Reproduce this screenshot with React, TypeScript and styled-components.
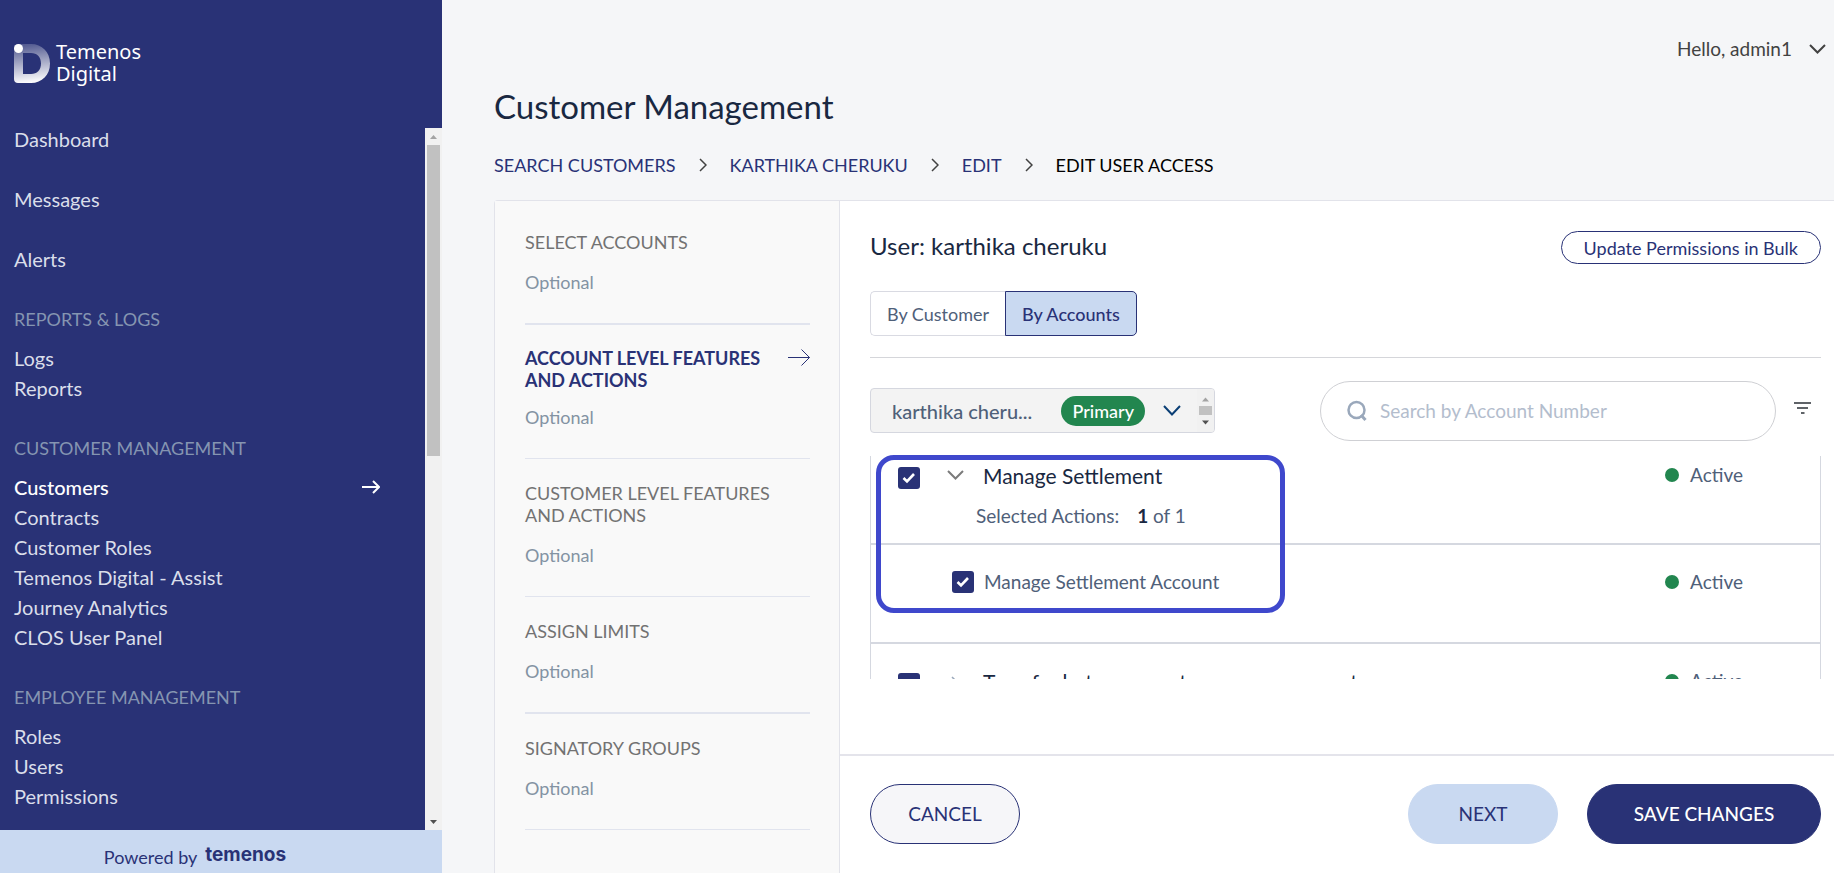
import React from "react";
import styled, { createGlobalStyle } from "styled-components";

const navy = "#293276";
const slate = "#4f6079";
const ink = "#192841";
const paleBlue = "#c9d9f1";
const green = "#22864f";

const GlobalStyle = createGlobalStyle`
  *, *::before, *::after { box-sizing: border-box; }
  body {
    margin: 0;
    background: #f5f6f8;
    font-family: Lato, "Liberation Sans", sans-serif;
    font-size: 19px;
    line-height: 24px;
    color: ${ink};
  }
  button, input { font: inherit; }
  a { color: inherit; text-decoration: none; }
  ul, ol { list-style: none; margin: 0; padding: 0; }
  h1, h2, p { margin: 0; font-weight: 400; }
`;

const Shell = styled.div`
  display: flex;
  height: 100vh;
  overflow: hidden;
`;

/* ---------- sidebar ---------- */

const Sidebar = styled.aside`
  display: flex;
  flex-direction: column;
  flex: none;
  width: 442px;
  background: ${navy};
  color: #dadeea;
`;

const Brand = styled.div`
  display: flex;
  align-items: center;
  gap: 6px;
  flex: none;
  height: 128px;
  padding: 0 14px 2px;
`;

const BrandName = styled.span`
  font-family: "Noto Sans", sans-serif;
  font-size: 20px;
  line-height: 22px;
  color: #fff;
`;

const NavArea = styled.div`
  display: flex;
  flex: 1;
  min-height: 0;
`;

const Nav = styled.nav`
  flex: 1;
  padding: 0 14px;
  overflow: hidden;
`;

const NavList = styled.ul<{ $gap: number }>`
  display: flex;
  flex-direction: column;
  gap: ${(p) => p.$gap}px;
`;

const NavLink = styled.a<{ $active?: boolean }>`
  display: flex;
  justify-content: space-between;
  align-items: center;
  padding-right: 31px;
  font-size: 20px;
  line-height: 22px;
  color: ${(p) => (p.$active ? "#fff" : "inherit")};
  font-weight: ${(p) => (p.$active ? 500 : 400)};
`;

const NavHeading = styled.h2`
  margin: 37px 0 16px;
  font-size: 18px;
  line-height: 24px;
  color: #8595b1;
`;

const Track = styled.div<{ $inset?: boolean }>`
  display: flex;
  flex-direction: column;
  align-items: center;
  flex: none;
  align-self: stretch;
  width: 17px;
  padding: ${(p) => (p.$inset ? "3px 0" : "0")};
  background: #f1f1f1;
`;

const Thumb = styled.div<{ $size: number }>`
  width: 13px;
  height: ${(p) => p.$size}px;
  margin-bottom: auto;
  background: #c1c1c1;
`;

const Powered = styled.footer`
  display: flex;
  justify-content: center;
  align-items: flex-start;
  gap: 8px;
  flex: none;
  height: 43px;
  padding: 15px 52px 0 0;
  overflow: hidden;
  background: ${paleBlue};
  color: ${navy};
  font-size: 18px;
`;

const Wordmark = styled.strong`
  font-family: Inter, sans-serif;
  font-size: 19px;
  font-weight: 700;
  line-height: 20px;
`;

/* ---------- page ---------- */

const Page = styled.main`
  display: flex;
  flex-direction: column;
  flex: 1;
  min-width: 0;
  padding-left: 52px;
`;

const TopBar = styled.header`
  display: flex;
  justify-content: flex-end;
  padding: 37px 8px 0 0;
`;

const UserMenu = styled.button`
  display: flex;
  align-items: center;
  gap: 17px;
  padding: 0;
  border: 0;
  background: none;
  color: #424242;
`;

const Title = styled.h1`
  margin-top: 25px;
  font-size: 33px;
  line-height: 40px;
`;

const Crumbs = styled.ol`
  display: flex;
  align-items: center;
  gap: 23px;
  margin: 27px 0 23px;
  font-size: 18px;
  color: ${navy};
`;

const Crumb = styled.li`
  display: flex;
  align-items: center;
  gap: 23px;
  &:last-child { color: #000; }
`;

const Panel = styled.div`
  display: flex;
  flex: 1;
  min-height: 0;
  border: 1px solid #e2e3ea;
  border-width: 1px 0 0 1px;
  border-radius: 4px 0 0 0;
  background: #fff;
`;

const Steps = styled.ol`
  flex: none;
  width: 345px;
  padding: 7px 29px 0 30px;
  border-right: 1px solid #e2e3ea;
  background: #f9f9f9;
  overflow: hidden;
`;

const Step = styled.li<{ $active?: boolean; $rule: number }>`
  display: flex;
  flex-direction: column;
  gap: ${(p) => (p.$active ? 15 : 18)}px;
  padding: ${(p) => (p.$active ? 22 : 23)}px 0 30px;
  border-bottom: ${(p) => p.$rule}px solid #e1e4ee;
  font-size: 18px;
  line-height: 22px;
  color: #8393a3;
`;

const StepLink = styled.a<{ $active?: boolean }>`
  display: flex;
  justify-content: space-between;
  color: ${(p) => (p.$active ? navy : "#727272")};
  font-weight: ${(p) => (p.$active ? 700 : 400)};
`;

const StepName = styled.span`
  width: 250px;
`;

/* ---------- access editor ---------- */

const Editor = styled.section`
  display: flex;
  flex-direction: column;
  flex: 1;
  min-width: 0;
`;

const EditorBody = styled.div`
  display: flex;
  flex-direction: column;
  flex: 1;
  min-height: 0;
  padding: 30px 13px 75px 30px;
`;

const EditorHead = styled.div`
  display: flex;
  justify-content: space-between;
  align-items: flex-start;
`;

const UserName = styled.h2`
  font-size: 24px;
  line-height: 30px;
`;

const BulkButton = styled.button`
  height: 33px;
  padding: 0 22px;
  border: 1px solid ${navy};
  border-radius: 17px;
  background: #fff;
  color: ${navy};
  font-size: 18px;
`;

const Tabs = styled.div`
  display: flex;
  padding: 27px 0 21px;
  border-bottom: 1px solid #d5d6da;
`;

const Tab = styled.button<{ $active?: boolean }>`
  height: 45px;
  padding: 0 16px;
  border: 1px solid ${(p) => (p.$active ? navy : "#d9dae2")};
  border-right-width: ${(p) => (p.$active ? 1 : 0)}px;
  border-radius: ${(p) => (p.$active ? "0 5px 5px 0" : "5px 0 0 5px")};
  background: ${(p) => (p.$active ? paleBlue : "#fff")};
  color: ${(p) => (p.$active ? navy : slate)};
  font-size: 18px;
  font-weight: ${(p) => (p.$active ? 500 : 400)};
`;

const Filters = styled.div`
  display: flex;
  align-items: center;
  padding: 23px 10px 15px 0;
`;

const AccountPicker = styled.div`
  display: flex;
  width: 345px;
  height: 45px;
  margin-bottom: 1px;
  border: 1px solid #d5d7df;
  border-radius: 4px;
  background: #f3f3f3;
  overflow: hidden;
`;

const PickerButton = styled.button`
  display: flex;
  align-items: center;
  flex: 1;
  padding: 0 16px 0 21px;
  border: 0;
  background: none;
  color: ${slate};
  font-size: 20px;
  line-height: 22px;
  font-weight: 500;
`;

const Primary = styled.span`
  margin: 0 18px 0 auto;
  padding: 4px 11px;
  border-radius: 15px;
  background: ${green};
  color: #fff;
  font-size: 18px;
`;

const SearchBox = styled.label`
  display: flex;
  align-items: center;
  gap: 13px;
  flex: 0 1 456px;
  height: 60px;
  margin: 0 18px 0 auto;
  padding: 0 26px;
  border: 1px solid #cfd0d4;
  border-radius: 30px;
`;

const SearchInput = styled.input`
  flex: 1;
  min-width: 0;
  padding: 0;
  border: 0;
  outline: 0;
  background: none;
  &::placeholder { color: #b3bdcd; opacity: 1; }
`;

const IconButton = styled.button`
  display: flex;
  padding: 0 0 6px;
  border: 0;
  background: none;
`;

const ListFrame = styled.div`
  display: flex;
  flex: 1;
  min-height: 0;
  position: relative;
`;

const List = styled.div`
  flex: 1;
  border: 1px solid #d5d8e0;
  border-width: 0 1px;
  overflow: hidden;
`;

/* the list is scrolled a little past its first row's top edge */
const ListContent = styled.div`
  margin-top: -18px;
`;

const Row = styled.div`
  display: flex;
  align-items: flex-start;
  min-height: 107px;
  padding: 26px 77px 0 27px;
  border-bottom: 2px solid #d5d8e0;
  color: ${slate};
  > :first-child { margin-top: 3px; }
`;

const ActionRow = styled.div`
  display: flex;
  align-items: center;
  gap: 10px;
  min-height: 99px;
  padding: 0 77px 23px 81px;
  border-bottom: 2px solid #d5d8e0;
  color: ${slate};
`;

const FeatureToggle = styled.button`
  display: flex;
  justify-content: center;
  width: 20px;
  margin: 6px 18px 0 25px;
  padding: 0;
  border: 0;
  background: none;
`;

const Feature = styled.div`
  display: flex;
  flex-direction: column;
  gap: 16px;
`;

const FeatureName = styled.label`
  font-size: 21px;
  color: ${ink};
`;

const ActionCount = styled.p`
  margin-left: -7px;
  b { margin-left: 13px; color: ${ink}; }
`;

const Status = styled.span`
  display: flex;
  align-items: center;
  gap: 11px;
  margin-left: auto;
  line-height: 22px;
  &::before {
    content: "";
    width: 14px;
    height: 14px;
    border-radius: 50%;
    background: ${green};
  }
`;

const CheckWrap = styled.span`
  display: grid;
  place-items: center;
  flex: none;
  width: 22px;
  height: 22px;
  > * { grid-area: 1 / 1; }
  svg { pointer-events: none; }
`;

const CheckInput = styled.input`
  appearance: none;
  width: 22px;
  height: 22px;
  margin: 0;
  border-radius: 3px;
  background: ${navy};
`;

const Highlight = styled.div`
  position: absolute;
  top: -1px;
  left: 6px;
  width: 409px;
  height: 158px;
  border: 5px solid #3f48cc;
  border-radius: 18px;
  pointer-events: none;
`;

const Actions = styled.footer`
  display: flex;
  gap: 29px;
  padding: 28px 13px 29px 30px;
  border-top: 2px solid #e4e4eb;
`;

const Action = styled.button<{ $kind: "outline" | "soft" | "solid" }>`
  height: 60px;
  min-width: ${(p) => (p.$kind === "solid" ? 234 : 150)}px;
  margin-right: ${(p) => (p.$kind === "outline" ? "auto" : "0")};
  border: 1px solid ${(p) => (p.$kind === "soft" ? paleBlue : navy)};
  border-radius: 30px;
  background: ${(p) => ({ outline: "#f6f6f9", soft: paleBlue, solid: navy })[p.$kind]};
  color: ${(p) => (p.$kind === "solid" ? "#fff" : navy)};
  font-weight: ${(p) => (p.$kind === "solid" ? 500 : 400)};
`;

/* ---------- drawings ---------- */

const Logo = () => (
  <svg width="36" height="39" viewBox="0 0 36 39" aria-hidden="true">
    <defs>
      <linearGradient id="d" x1="0.4" y1="0" x2="0.5" y2="1">
        <stop offset="0" stopColor="#fff" stopOpacity="0.2" />
        <stop offset="1" stopColor="#fff" />
      </linearGradient>
    </defs>
    <path
      fillRule="evenodd"
      fill="url(#d)"
      d="M4 0H17C28 0 36 8 36 19.500C36 31 28 39 17 39H4C1.500 39 0 37.500 0 35V4C0 1.500 1.500 0 4 0ZM9 9V30H17C23 30 27 26 27 19.500C27 13 23 9 17 9Z"
    />
    <circle cx="4.500" cy="4.500" r="4.500" fill="#fff" />
  </svg>
);

const Chevron = ({ w, h, color, width = 2 }: { w: number; h: number; color: string; width?: number }) => (
  <svg width={w} height={h} viewBox={`0 0 ${w} ${h}`} fill="none" aria-hidden="true">
    <path d={`M1 1L${w / 2} ${h - 1.5}L${w - 1} 1`} stroke={color} strokeWidth={width} />
  </svg>
);

const ChevronRight = ({ color = "#424242" }: { color?: string }) => (
  <svg width="8" height="14" viewBox="0 0 8 14" fill="none" aria-hidden="true">
    <path d="M1 1L7 7L1 13" stroke={color} strokeWidth="1.500" />
  </svg>
);

const Arrow = ({ w, h, head, width }: { w: number; h: number; head: number; width: number }) => {
  const tip = w - width / 2;
  return (
    <svg width={w} height={h} viewBox={`0 0 ${w} ${h}`} fill="none" stroke="currentColor" strokeWidth={width} aria-hidden="true">
      <path d={`M0 ${h / 2}H${tip}M${tip - head} ${h / 2 - head}L${tip} ${h / 2}L${tip - head} ${h / 2 + head}`} />
    </svg>
  );
};

const ScrollArrow = ({ down, color, size = 17 }: { down?: boolean; color: string; size?: number }) => (
  <svg width="17" height={size} viewBox={`0 0 17 ${size}`} aria-hidden="true">
    <path
      transform={`translate(0 ${(size - 17) / 2})`}
      d={down ? "M5 7H12L8.500 11Z" : "M5 11H12L8.500 7Z"}
      fill={color}
    />
  </svg>
);

const Checkbox = ({ id }: { id: string }) => (
  <CheckWrap>
    <CheckInput id={id} type="checkbox" defaultChecked />
    <svg width="14" height="12" viewBox="0 0 14 12" fill="none" aria-hidden="true">
      <path d="M1.500 6L5 9.500L12 2" stroke="#fff" strokeWidth="2.600" />
    </svg>
  </CheckWrap>
);

/* ---------- content ---------- */

const topLinks = ["Dashboard", "Messages", "Alerts"];
const sections = [
  { heading: "REPORTS & LOGS", links: ["Logs", "Reports"] },
  {
    heading: "CUSTOMER MANAGEMENT",
    links: ["Customers", "Contracts", "Customer Roles", "Temenos Digital - Assist", "Journey Analytics", "CLOS User Panel"],
  },
  { heading: "EMPLOYEE MANAGEMENT", links: ["Roles", "Users", "Permissions"] },
];
const crumbs = ["SEARCH CUSTOMERS", "KARTHIKA CHERUKU", "EDIT", "EDIT USER ACCESS"];
const steps = [
  { name: "SELECT ACCOUNTS", rule: 2 },
  { name: "ACCOUNT LEVEL FEATURES AND ACTIONS", rule: 1, active: true },
  { name: "CUSTOMER LEVEL FEATURES AND ACTIONS", rule: 1 },
  { name: "ASSIGN LIMITS", rule: 2 },
  { name: "SIGNATORY GROUPS", rule: 1 },
];

export default function App() {
  return (
    <Shell>
      <GlobalStyle />
      <Sidebar>
        <Brand>
          <Logo />
          <BrandName>
            Temenos
            <br />
            Digital
          </BrandName>
        </Brand>
        <NavArea>
          <Nav>
            <NavList $gap={38}>
              {topLinks.map((t) => (
                <li key={t}>
                  <NavLink href="#">{t}</NavLink>
                </li>
              ))}
            </NavList>
            {sections.map((s) => (
              <React.Fragment key={s.heading}>
                <NavHeading>{s.heading}</NavHeading>
                <NavList $gap={8}>
                  {s.links.map((t) => (
                    <li key={t}>
                      <NavLink href="#" $active={t === "Customers"}>
                        {t}
                        {t === "Customers" && <Arrow w={18} h={16} head={6} width={2} />}
                      </NavLink>
                    </li>
                  ))}
                </NavList>
              </React.Fragment>
            ))}
          </Nav>
          <Track>
            <ScrollArrow color="#a3a3a3" />
            <Thumb $size={311} />
            <ScrollArrow down color="#505050" />
          </Track>
        </NavArea>
        <Powered>
          Powered by <Wordmark>temenos</Wordmark>
        </Powered>
      </Sidebar>

      <Page>
        <TopBar>
          <UserMenu>
            Hello, admin1
            <Chevron w={17} h={10} color="#424242" />
          </UserMenu>
        </TopBar>
        <Title>Customer Management</Title>
        <Crumbs>
          {crumbs.map((c, i) => (
            <Crumb key={c}>
              {i < crumbs.length - 1 ? <a href="#">{c}</a> : c}
              {i < crumbs.length - 1 && <ChevronRight />}
            </Crumb>
          ))}
        </Crumbs>
        <Panel>
          <Steps>
            {steps.map((s) => (
              <Step key={s.name} $active={s.active} $rule={s.rule}>
                <StepLink href="#" $active={s.active}>
                  <StepName>{s.name}</StepName>
                  {s.active && <Arrow w={22} h={21} head={8} width={1} />}
                </StepLink>
                Optional
              </Step>
            ))}
          </Steps>
          <Editor>
            <EditorBody>
              <EditorHead>
                <UserName>User: karthika cheruku</UserName>
                <BulkButton>Update Permissions in Bulk</BulkButton>
              </EditorHead>
              <Tabs>
                <Tab>By Customer</Tab>
                <Tab $active>By Accounts</Tab>
              </Tabs>
              <Filters>
                <AccountPicker>
                  <PickerButton aria-haspopup="listbox">
                    karthika cheru...
                    <Primary>Primary</Primary>
                    <Chevron w={18} h={11} color="#0b3f75" />
                  </PickerButton>
                  <Track $inset>
                    <ScrollArrow color="#a3a3a3" size={14} />
                    <Thumb $size={9} />
                    <ScrollArrow down color="#505050" size={14} />
                  </Track>
                </AccountPicker>
                <SearchBox>
                  <svg width="20" height="22" viewBox="0 0 20 22" fill="none" stroke="#9aa8bb" strokeWidth="2.500" aria-hidden="true">
                    <circle cx="9.500" cy="10" r="8" />
                    <path d="M14 15L18.500 20" strokeWidth="3" />
                  </svg>
                  <SearchInput type="text" placeholder="Search by Account Number" aria-label="Search by Account Number" />
                </SearchBox>
                <IconButton aria-label="Filter">
                  <svg width="17" height="12" viewBox="0 0 17 12" fill="none" stroke="#5f6368" strokeWidth="2" aria-hidden="true">
                    <path d="M0 1H17M3 6H14M7 11H10.500" />
                  </svg>
                </IconButton>
              </Filters>
              <ListFrame>
                <List>
                  <ListContent>
                    <Row>
                      <Checkbox id="settlement" />
                      <FeatureToggle aria-label="Collapse">
                        <Chevron w={17} h={10} color="#7b7b7b" />
                      </FeatureToggle>
                      <Feature>
                        <FeatureName htmlFor="settlement">Manage Settlement</FeatureName>
                        <ActionCount>
                          Selected Actions: <b>1</b> of 1
                        </ActionCount>
                      </Feature>
                      <Status>Active</Status>
                    </Row>
                    <ActionRow>
                      <Checkbox id="settlement-account" />
                      <label htmlFor="settlement-account">Manage Settlement Account</label>
                      <Status>Active</Status>
                    </ActionRow>
                    <Row>
                      <Checkbox id="transfer" />
                      <FeatureToggle aria-label="Expand">
                        <ChevronRight color="#9aa8bb" />
                      </FeatureToggle>
                      <FeatureName htmlFor="transfer">Transfer between customer own accounts</FeatureName>
                      <Status>Active</Status>
                    </Row>
                  </ListContent>
                </List>
                <Highlight />
              </ListFrame>
            </EditorBody>
            <Actions>
              <Action $kind="outline">CANCEL</Action>
              <Action $kind="soft">NEXT</Action>
              <Action $kind="solid">SAVE CHANGES</Action>
            </Actions>
          </Editor>
        </Panel>
      </Page>
    </Shell>
  );
}
